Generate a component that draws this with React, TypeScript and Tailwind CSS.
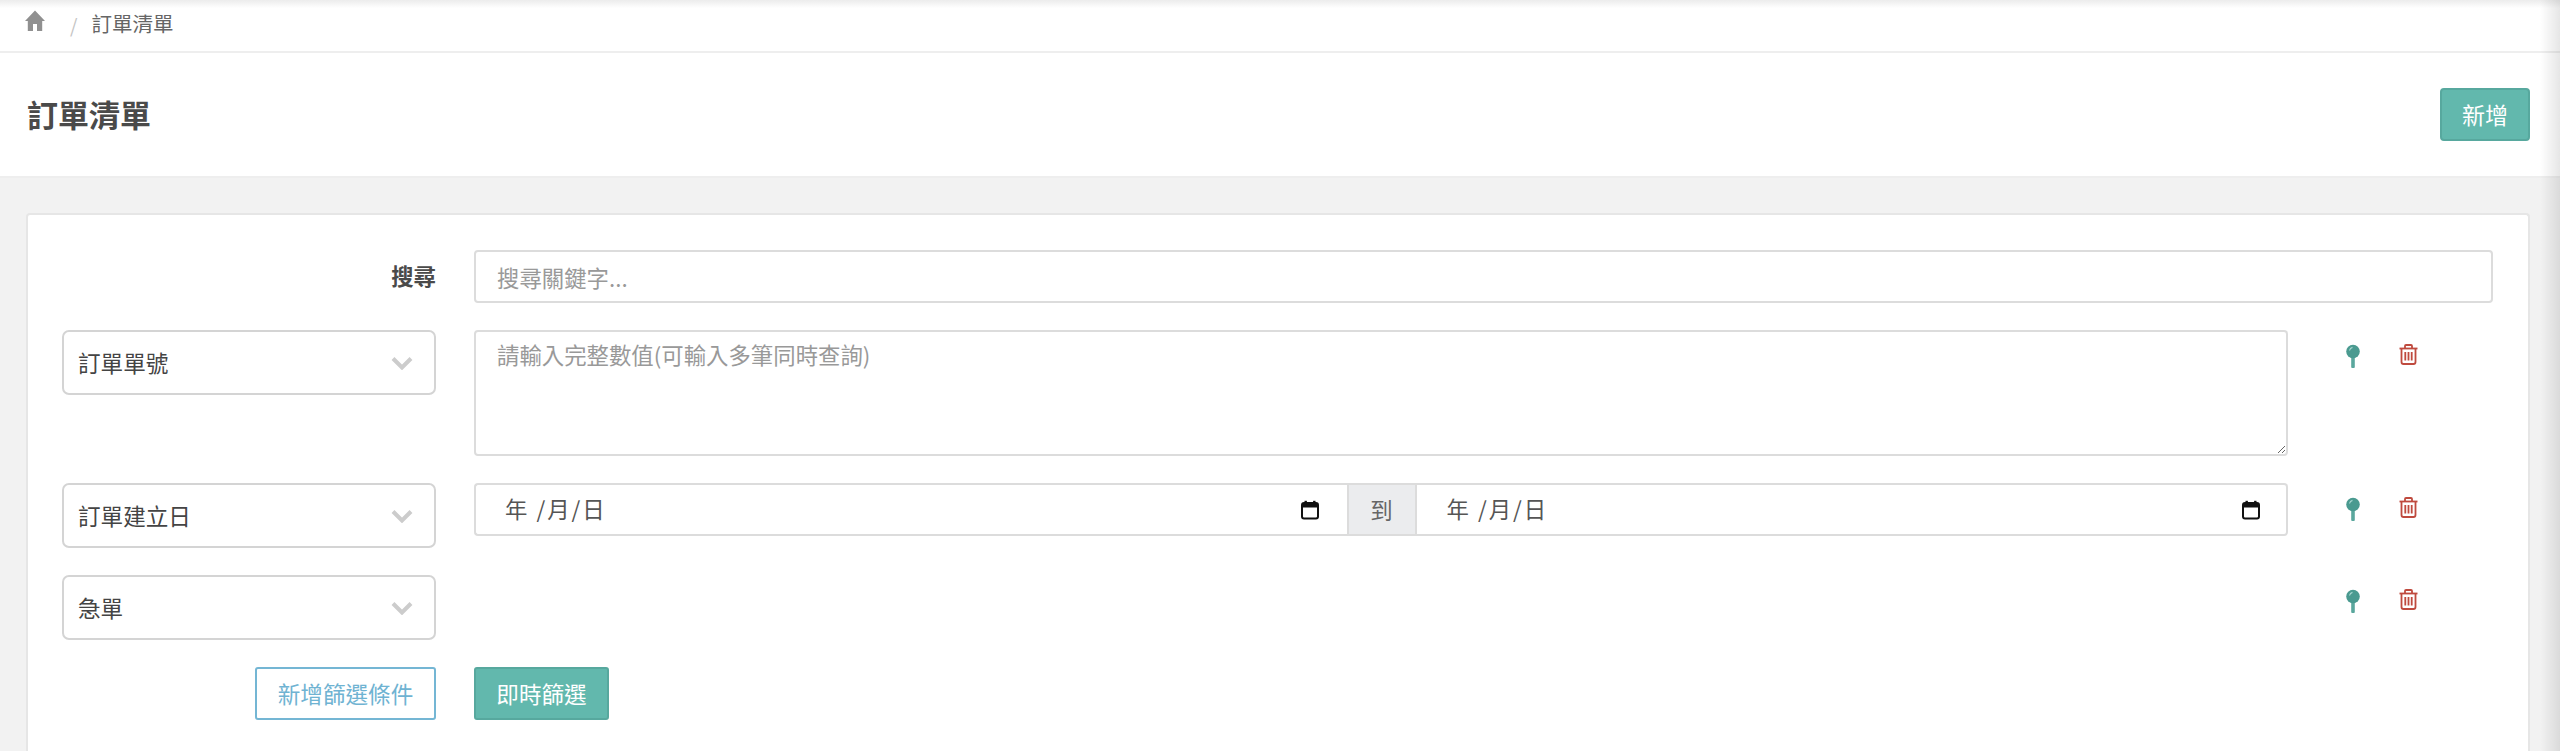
import React from "react";

const Chevron = () => (
  <svg width="22" height="14" viewBox="0 0 22 14" fill="none" className="shrink-0">
    <path d="M2 2.5 L11 11.5 L20 2.5" stroke="#cccccc" strokeWidth="4" />
  </svg>
);

const SelectBox = ({ label }: { label: string }) => (
  <div className="flex h-[65px] w-[374px] shrink-0 items-center justify-between rounded-[7px] border-2 border-[#d4d4d4] bg-white pl-[14px] pr-[21px] text-[22.6px] text-[#444]">
    <span>{label}</span>
    <Chevron />
  </div>
);

const Pin = () => (
  <svg width="16" height="24" viewBox="0 0 16 24">
    <rect x="6.2" y="12" width="3.6" height="12" rx="1" fill="#5aa79d" />
    <circle cx="8" cy="7.5" r="6.8" fill="#4a9a90" />
    <path d="M4.5 6.5 A4 4 0 0 1 7.5 3.4" stroke="#a9d6d0" strokeWidth="1.2" fill="none" />
  </svg>
);

const Trash = () => (
  <svg width="19" height="21" viewBox="0 0 19 21" fill="none" stroke="#bf4a3e" strokeWidth="1.8">
    <path d="M0.5 4.5 H18.5" />
    <path d="M6 4 V2 A1 1 0 0 1 7 1 H12 A1 1 0 0 1 13 2 V4" />
    <path d="M2.5 5 V18 A2 2 0 0 0 4.5 20 H14.5 A2 2 0 0 0 16.5 18 V5" />
    <path d="M6.3 8 V16.5 M9.5 8 V16.5 M12.7 8 V16.5" />
  </svg>
);

const Actions = () => (
  <div className="ml-[57px] flex shrink-0 items-start gap-[38px] pt-[14px]">
    <Pin />
    <Trash />
  </div>
);

const CalendarIcon = () => (
  <svg width="20" height="20" viewBox="0 0 20 20" className="shrink-0">
    <rect x="2" y="3" width="16" height="15.5" rx="2" fill="none" stroke="#111" strokeWidth="2" />
    <rect x="2" y="3" width="16" height="4.5" fill="#111" />
    <rect x="4.5" y="0.8" width="2.4" height="3" fill="#111" />
    <rect x="13.1" y="0.8" width="2.4" height="3" fill="#111" />
  </svg>
);

const DateField = ({ className }: { className: string }) => (
  <div className={`flex min-w-0 flex-1 items-center justify-between border-y-2 border-[#dcdcdc] bg-white text-[22.4px] text-[#555] ${className}`}>
    <span className="mb-[2px] tracking-[2px]">年 /月/日</span>
    <CalendarIcon />
  </div>
);

export default function App() {
  return (
    <div
      className="relative flex h-[751px] w-full flex-col overflow-hidden bg-[#f2f2f2]"
      style={{ fontFamily: '"Noto Sans CJK TC", "Noto Sans", sans-serif' }}
    >
      <div className="flex h-[51px] items-center bg-gradient-to-b from-[#ececec] via-white via-[16%] to-white pl-[25px]">
        <svg width="20" height="21" viewBox="0 0 20 21" className="mb-[11px]">
          <path d="M10 0.5 L20 11 H17.2 V21 H12 V14 H8 V21 H2.8 V11 H0 Z" fill="#909090" />
        </svg>
        <span className="ml-[25px] mb-[1px] text-[19px] text-[#c4c4c4]">/</span>
        <span className="ml-[14px] mb-[4px] text-[20.5px] leading-none text-[#666]">訂單清單</span>
      </div>
      <div className="flex h-[127px] shrink-0 items-center justify-between border-y-2 border-y-[#eeeeee] bg-white pl-[27px] pr-[30px]">
        <h1 className="mb-[2px] text-[31px] font-bold leading-none text-[#4a4a4a]">訂單清單</h1>
        <button className="h-[53px] w-[90px] rounded-[4px] border-2 border-[#57a89e] bg-[#62b8ad] text-[23px] text-white">
          新增
        </button>
      </div>
      <div className="min-h-0 flex-1 pl-[26px] pr-[30px] pt-[35px]">
        <div className="flex h-full flex-col gap-[27px] rounded-t-[4px] border-x-2 border-t-2 border-[#e6e6e6] bg-white pl-[34px] pr-[35px] pt-[35px]">
          <div className="flex items-center">
            <label className="mb-[2px] w-[374px] shrink-0 text-right text-[22.4px] font-bold text-[#4a4a4a]">搜尋</label>
            <input
              placeholder="搜尋關鍵字..."
              className="ml-[38px] h-[53px] min-w-0 flex-1 rounded-[4px] border-2 border-[#dcdcdc] px-[21px] text-[22.4px] outline-none placeholder:text-[#999]"
            />
          </div>
          <div className="flex items-start">
            <SelectBox label="訂單單號" />
            <textarea
              placeholder="請輸入完整數值(可輸入多筆同時查詢)"
              className="ml-[38px] block h-[126px] w-[1814px] shrink-0 rounded-[4px] border-2 border-[#dcdcdc] px-[21px] py-[6px] text-[22.4px] outline-none placeholder:text-[#999]"
            />
            <Actions />
          </div>
          <div className="flex items-start">
            <SelectBox label="訂單建立日" />
            <div className="ml-[38px] flex h-[53px] w-[1814px] shrink-0">
              <DateField className="rounded-l-[4px] border-l-2 pl-[29px] pr-[27px]" />
              <div className="flex w-[70px] shrink-0 items-center justify-center border-2 border-[#dcdcdc] bg-[#ebecee] text-[22.4px] text-[#666]">
                到
              </div>
              <DateField className="rounded-r-[4px] border-r-2 pl-[30px] pr-[25px]" />
            </div>
            <Actions />
          </div>
          <div className="flex items-start">
            <SelectBox label="急單" />
            <div className="ml-[38px] w-[1814px] shrink-0" />
            <Actions />
          </div>
          <div className="flex items-start">
            <div className="flex w-[374px] shrink-0 justify-end">
              <button className="h-[53px] w-[181px] rounded-[3px] border-2 border-[#74b6d4] bg-white text-[22.6px] text-[#6fb3d2]">
                新增篩選條件
              </button>
            </div>
            <button className="ml-[38px] h-[53px] w-[135px] rounded-[3px] border-2 border-[#57a89e] bg-[#62b8ad] text-[22.6px] text-white">
              即時篩選
            </button>
          </div>
        </div>
      </div>
      <div className="pointer-events-none absolute inset-y-0 right-0 w-[20px] bg-gradient-to-r from-transparent to-black/10" />
    </div>
  );
}
